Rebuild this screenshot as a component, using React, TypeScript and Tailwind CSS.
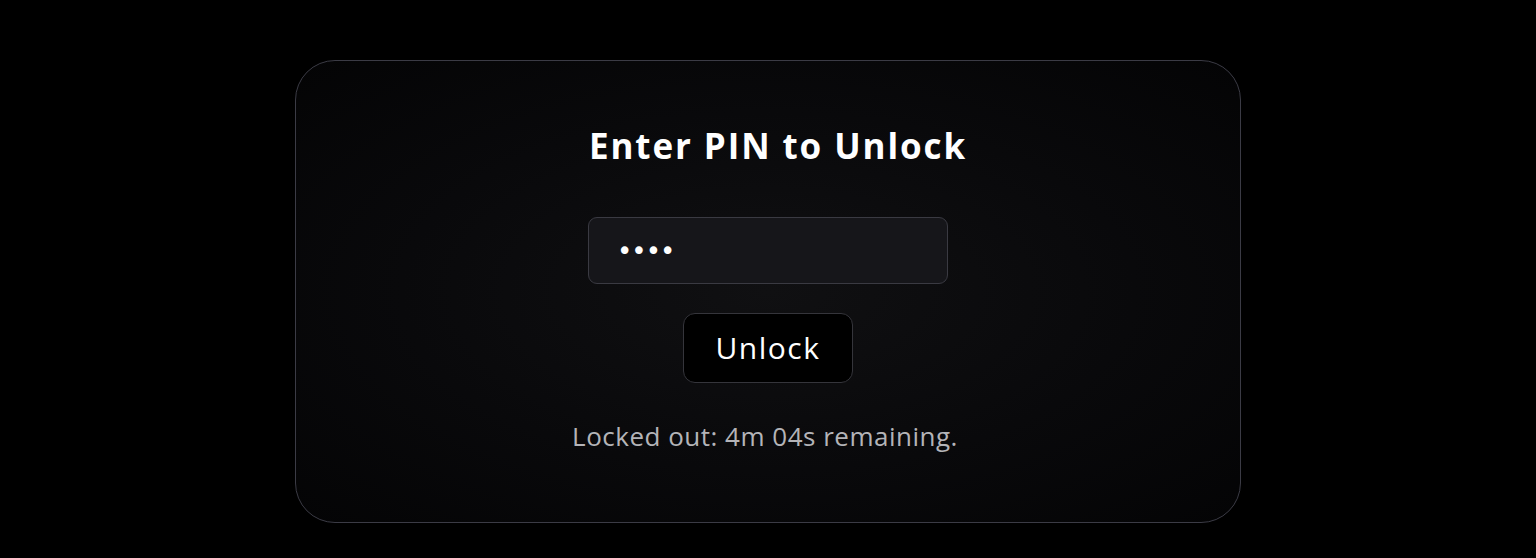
import { useState } from "react";

export default function App() {
  const [pin, setPin] = useState("1234");

  return (
    <div className="flex min-h-[558px] w-full items-start justify-center bg-black pt-[60px] font-['Open_Sans',sans-serif]">
      <div className="flex h-[463px] w-[946px] flex-col items-center rounded-[40px] border border-[#3b3b45] bg-[radial-gradient(ellipse_at_center,#101012_0%,#09090b_55%,#040405_100%)] pt-[62px]">
        <h1 className="ml-[20px] text-[35px] font-bold leading-[46px] tracking-[1.9px] text-white">Enter PIN to Unlock</h1>

        <input
          type="password"
          value={pin}
          onChange={(e) => setPin(e.target.value)}
          className="mt-[48px] h-[67px] w-[360px] rounded-[9px] border border-[#3a3a42] bg-[#16161a] px-[28px] font-['DejaVu_Sans',sans-serif] text-[26px] tracking-[-1px] text-white outline-none"
        />

        <button
          type="button"
          className="mt-[29px] h-[70px] w-[170px] rounded-[12px] border border-[#35353b] bg-black text-[30px] leading-none tracking-[1.5px] text-white"
        >
          Unlock
        </button>

        <p className="mr-[6px] mt-[37px] text-[26px] leading-[32px] tracking-[0.5px] text-[#b4b4b8]">Locked out: 4m 04s remaining.</p>
      </div>
    </div>
  );
}
